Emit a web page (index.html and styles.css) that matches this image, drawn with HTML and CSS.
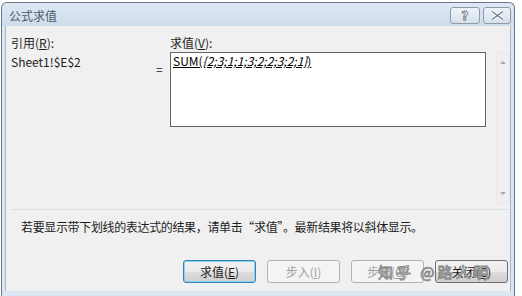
FILE: index.html
```html
<!DOCTYPE html>
<html lang="zh-CN">
<head>
    <meta charset="UTF-8">
    <title>公式求值</title>
    <link rel="stylesheet" href="styles.css">
</head>
<body>
    <div class="dialog">
        <div class="titlebar">
            <span class="title">公式求值</span>
            <div class="caption-buttons">
                <span class="cap-btn">?</span>
                <span class="cap-btn close">
                    <svg width="13" height="9" viewBox="0 0 13 9">
                        <path d="M1 0.5 L12 8.5 M12 0.5 L1 8.5" stroke="#fff" stroke-width="3" fill="none"/>
                        <path d="M1 0.5 L12 8.5 M12 0.5 L1 8.5" stroke="#6a7480" stroke-width="1.2" fill="none"/>
                    </svg>
                </span>
            </div>
        </div>
        <div class="client">
            <div class="eval-area">
                <div class="ref-col">
                    <div class="label">引用(<u>R</u>):</div>
                    <div class="ref-value">Sheet1!$E$2</div>
                </div>
                <div class="eq">=</div>
                <div class="val-col">
                    <div class="label">求值(<u>V</u>):</div>
                    <div class="val-row">
                        <div class="val-box"><u>SUM(<i>{2;3;1;1;3;2;2;3;2;1}</i>)</u></div>
                        <div class="scrollbar">
                            <span class="arrow up"></span>
                            <span class="arrow down"></span>
                        </div>
                    </div>
                </div>
            </div>
            <div class="separator"></div>
            <p class="hint">若要显示带下划线的表达式的结果，请单击“求值”。最新结果将以斜体显示。</p>
            <div class="buttons">
                <button class="btn default">求值(<u>E</u>)</button>
                <button class="btn" disabled>步入(<u>I</u>)</button>
                <button class="btn" disabled>步出(<u>O</u>)</button>
                <button class="btn">关闭(<u>C</u>)</button>
            </div>
            <div class="watermark">知乎 @路人明</div>
        </div>
    </div>
</body>
</html>
```

FILE: styles.css
```css
/* Page */
body {
    margin: 0;
    background-color: #ffffff;
    font-family: "Noto Sans CJK SC", "Noto Sans", sans-serif;
    font-size: 12px;
    color: #1e1e1e;
    width: 522px;
    height: 296px;
    overflow: hidden;
}

/* Window frame */
.dialog {
    margin: 2px 0 0 1px;
    width: 514px;
    height: 300px;
    border: 1px solid #6b7785;
    border-bottom: none;
    border-radius: 6px 6px 0 0;
    background-color: #dbe6f2;
    padding: 0 3px;
    box-sizing: border-box;
}

.titlebar {
    height: 23px;
    display: flex;
    align-items: center;
    justify-content: space-between;
    background: linear-gradient(#dde8f4, #cfdceb);
    margin: 0 -3px;
    padding: 0 3px 0 7px;
    border-radius: 6px 6px 0 0;
}

.title {
    color: #4f5c6b;
    font-size: 12px;
    padding-top: 1px;
}

/* Help and close buttons */
.caption-buttons {
    display: flex;
    gap: 3px;
    margin-top: 2px;
}

.cap-btn {
    width: 28px;
    height: 15px;
    border: 1px solid #8f9aa6;
    border-radius: 3px;
    background: linear-gradient(#eef3f9, #d6e1ed);
    display: flex;
    align-items: center;
    justify-content: center;
    font-family: "DejaVu Sans", sans-serif;
    font-size: 12px;
    font-weight: bold;
    color: #ffffff;
    -webkit-text-stroke: 0.8px #6a7480;
    line-height: 1;
}

.cap-btn.close {
    width: 26px;
}

/* Client area */
.client {
    position: relative;
    background-color: #f0f0f0;
    height: 265px;
    border-left: 1px solid #a9b6c3;
    border-right: 1px solid #a9b6c3;
}

.eval-area {
    display: flex;
    padding: 8px 0 0 5px;
}

.label {
    height: 18px;
    line-height: 18px;
}

.ref-col {
    width: 143px;
    flex-shrink: 0;
}

.ref-value {
    margin-top: 1px;
}

.eq {
    width: 14px;
    padding: 28px 0 0 2px;
    line-height: 14px;
    flex-shrink: 0;
}

.val-col {
    flex-shrink: 0;
}

.val-row {
    display: flex;
    align-items: flex-start;
}

.val-box {
    width: 310px;
    height: 71px;
    background-color: #ffffff;
    border: 1px solid #646464;
    padding: 1px 2px;
    line-height: 14px;
    color: #000000;
    font-size: 12px;
}

.val-box i {
    font-style: italic;
}

/* Disabled scrollbar */
.scrollbar {
    margin-left: 10px;
    width: 14px;
    height: 152px;
    border: 1px solid #e8e8e8;
    background-color: #efefef;
    display: flex;
    flex-direction: column;
    justify-content: space-between;
    align-items: center;
    padding: 8px 0;
    box-sizing: border-box;
}

.arrow {
    width: 0;
    height: 0;
    border-left: 3px solid transparent;
    border-right: 3px solid transparent;
}

.arrow.up {
    border-bottom: 3px solid #a8a8a8;
}

.arrow.down {
    border-top: 3px solid #a8a8a8;
}

.separator {
    margin: 5px 2px 0 5px;
    height: 1px;
    background-color: #d8dfe6;
}

.hint {
    margin: 9px 0 0 15px;
    line-height: 16px;
    letter-spacing: -0.35px;
}

/* Command buttons */
.buttons {
    display: flex;
    justify-content: flex-end;
    gap: 11px;
    padding: 25px 2px 0 0;
}

.btn {
    width: 73px;
    height: 23px;
    font-family: "Noto Sans CJK SC", "Noto Sans", sans-serif;
    font-size: 12px;
    color: #1e1e1e;
    border: 1px solid #707070;
    border-radius: 3px;
    background: linear-gradient(#f2f2f2 0%, #ebebeb 50%, #dddddd 51%, #cfcfcf 100%);
    padding: 0;
}

.btn.default {
    border-color: #3c7fb1;
    box-shadow: inset 0 0 0 1px #7fd5f6;
}

.btn:disabled {
    color: #a0a0a0;
    border-color: #adb2b5;
    background: #f4f4f4;
}

/* Site watermark over the buttons */
.watermark {
    position: absolute;
    left: 372px;
    top: 235px;
    font-size: 15px;
    color: #f4f4f4;
    -webkit-text-stroke: 0.9px #8a8a8a;
    letter-spacing: 3px;
}
```
